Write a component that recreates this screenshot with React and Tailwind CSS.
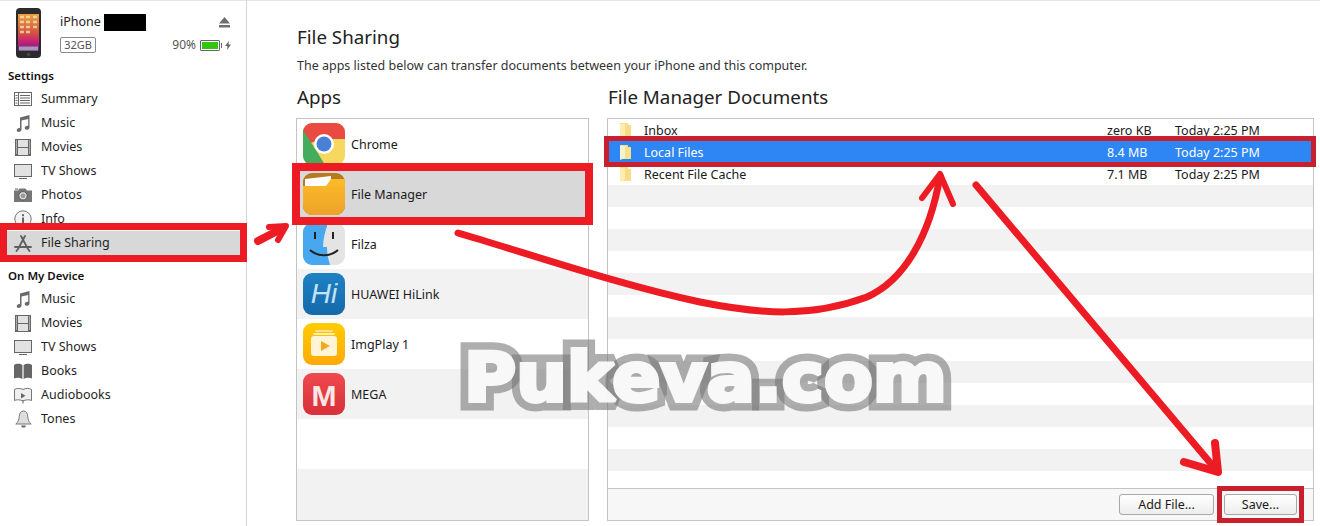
const settings = [
  ["Summary", SummaryIcon],
  ["Music", MusicIcon],
  ["Movies", FilmIcon],
  ["TV Shows", TvIcon],
  ["Photos", CameraIcon],
  ["Info", InfoIcon],
  ["File Sharing", AppStoreIcon],
];

const device = [
  ["Music", MusicIcon],
  ["Movies", FilmIcon],
  ["TV Shows", TvIcon],
  ["Books", BookIcon],
  ["Audiobooks", AudiobookIcon],
  ["Tones", BellIcon],
];

const apps = [
  ["Chrome", ChromeIcon],
  ["File Manager", FolderAppIcon],
  ["Filza", FilzaIcon],
  ["HUAWEI HiLink", HiLinkIcon],
  ["ImgPlay 1", ImgPlayIcon],
  ["MEGA", MegaIcon],
  ["", null],
  ["", null],
];

const docs = [
  ["Inbox", "zero KB", "Today 2:25 PM"],
  ["Local Files", "8.4 MB", "Today 2:25 PM"],
  ["Recent File Cache", "7.1 MB", "Today 2:25 PM"],
];

function SummaryIcon() {
  return (
    <svg width="18" height="14" viewBox="0 0 18 14" fill="none" stroke="#666" strokeWidth="1">
      <rect x="0.5" y="0.5" width="17" height="13" />
      <path d="M4.5 1v12M6 3.5h10M6 6h10M6 8.5h10M6 11h10M1.5 3.5h2M1.5 6h2M1.5 8.5h2M1.5 11h2" />
    </svg>
  );
}

function MusicIcon() {
  return (
    <svg width="14" height="17" viewBox="0 0 14 17" fill="#6a6a6a">
      <path d="M4 2.500 13.500 0v12.200c0 1.600-1.300 2.600-2.800 2.600-1.200 0-2-.7-2-1.700 0-1.300 1.200-2.100 2.600-2.300l.9-.2V4L5.500 5.500v9c0 1.600-1.300 2.500-2.800 2.500-1.200 0-2-.7-2-1.700 0-1.300 1.200-2.100 2.600-2.300l.7-.2z" />
    </svg>
  );
}

function FilmIcon() {
  return (
    <svg width="16" height="17" viewBox="0 0 16 17">
      <rect x="0" y="0" width="16" height="17" fill="#666" />
      <rect x="3" y="1" width="10" height="7" fill="#e2e2e2" />
      <rect x="3" y="9" width="10" height="7" fill="#e2e2e2" />
      <path d="M1 2h1M1 4h1M1 6h1M1 8h1M1 10h1M1 12h1M1 14h1M14 2h1M14 4h1M14 6h1M14 8h1M14 10h1M14 12h1M14 14h1" stroke="#eee" strokeWidth="1" />
    </svg>
  );
}

function TvIcon() {
  return (
    <svg width="18" height="15" viewBox="0 0 18 15">
      <rect x="0.5" y="0.5" width="17" height="12" fill="#e2e2e2" stroke="#666" />
      <path d="M5 14.500h8" stroke="#666" />
    </svg>
  );
}

function CameraIcon() {
  return (
    <svg width="18" height="14" viewBox="0 0 18 14">
      <path d="M0 2.500h4L5.500.5h6l1.500 2h5V14H0z" fill="#777" />
      <circle cx="9" cy="7.800" r="4.200" fill="#ddd" stroke="#555" />
      <circle cx="9" cy="7.800" r="2.400" fill="#999" />
      <rect x="1" y="0.500" width="3" height="1.200" fill="#777" />
    </svg>
  );
}

function InfoIcon() {
  return (
    <svg width="18" height="18" viewBox="0 0 18 18">
      <circle cx="9" cy="9" r="8.200" fill="#f2f2f2" stroke="#777" />
      <rect x="8" y="7.500" width="2" height="6" fill="#666" />
      <rect x="8" y="4.200" width="2" height="2" fill="#666" />
    </svg>
  );
}

function AppStoreIcon() {
  return (
    <svg width="18" height="17" viewBox="0 0 18 17" fill="none" stroke="#5f5f5f" strokeWidth="1.800" strokeLinecap="round">
      <path d="M7 1l7 13M11 1 4 14M1 12h16M14 14l1.500 2M4 14l-1.500 2" />
    </svg>
  );
}

function BookIcon() {
  return (
    <svg width="18" height="16" viewBox="0 0 18 16" fill="#666">
      <path d="M0 2C2 .5 6 .3 8.400 2v14C6 14.500 2 14.500 0 15.500zM18 2c-2-1.500-6-1.700-8.400 0v14c2.400-1.500 6.400-1.500 8.400-.5z" />
    </svg>
  );
}

function AudiobookIcon() {
  return (
    <svg width="18" height="17" viewBox="0 0 18 17">
      <path d="M.5 2.500C2.500 1 6.500 1 9 2.500c2.500-1.500 6.500-1.500 8.500 0v11c-2-1-6-1-8.500.5-2.500-1.500-6.500-1.500-8.500-.5z" fill="#efefef" stroke="#777" />
      <path d="M7 6l4.500 2.700L7 11.500z" fill="#666" />
      <path d="M9 13v3.500" stroke="#666" />
    </svg>
  );
}

function BellIcon() {
  return (
    <svg width="17" height="18" viewBox="0 0 17 18">
      <path d="M8.500 1C5.500 1 4.500 3.500 4.200 6.500 4 9.500 3.500 12 .8 14h15.400c-2.700-2-3.200-4.500-3.400-7.500C12.500 3.500 11.500 1 8.500 1z" fill="#ddd" stroke="#777" />
      <path d="M6 15.500h5l-1 2H7z" fill="#666" />
    </svg>
  );
}

function ChromeIcon() {
  return (
    <svg width="42" height="42" viewBox="0 0 42 42">
      <rect width="42" height="42" rx="9" fill="#f6d860" />
      <path d="M0 9a9 9 0 0 1 9-9h24a9 9 0 0 1 9 9v7H21L7 20z" fill="#e94b43" />
      <path d="M0 7 13 27l9 15H9a9 9 0 0 1-9-9z" fill="#43ad5b" />
      <circle cx="21" cy="21" r="10" fill="#fff" />
      <circle cx="21" cy="21" r="7.500" fill="#4a7fd6" />
    </svg>
  );
}

function FolderAppIcon() {
  return (
    <svg width="42" height="42" viewBox="0 0 42 42">
      <defs>
        <linearGradient id="fm" x1="0" y1="0" x2="0" y2="1">
          <stop offset="0" stopColor="#fdbb28" />
          <stop offset="1" stopColor="#eba32a" />
        </linearGradient>
      </defs>
      <rect width="42" height="42" rx="9" fill="#b57a22" />
      <path d="M2 6 28 3v11H2z" fill="#fff" />
      <path d="M0 13h23l5-7h14v27a9 9 0 0 1-9 9H9a9 9 0 0 1-9-9z" fill="url(#fm)" />
    </svg>
  );
}

function FilzaIcon() {
  return (
    <svg width="42" height="42" viewBox="0 0 42 42">
      <rect width="42" height="42" rx="9" fill="#e4e4e4" />
      <path d="M9 0h16c-3 8-5 17-5 24h4c0 6 1 12 3 18H9a9 9 0 0 1-9-9V9a9 9 0 0 1 9-9z" fill="#47a8f0" />
      <path d="M12 9v7M30 9v7" stroke="#222" strokeWidth="2" />
      <path d="M7 27c8 7 20 7 28 0" fill="none" stroke="#222" strokeWidth="2" />
    </svg>
  );
}

function HiLinkIcon() {
  return (
    <svg width="42" height="42" viewBox="0 0 42 42">
      <defs>
        <linearGradient id="hi" x1="0" y1="0" x2="0" y2="1">
          <stop offset="0" stopColor="#1f81c4" />
          <stop offset="1" stopColor="#146aa9" />
        </linearGradient>
      </defs>
      <rect width="42" height="42" rx="9" fill="url(#hi)" />
      <text x="21" y="30" textAnchor="middle" fontFamily="'Liberation Sans', sans-serif" fontStyle="italic" fontSize="28" fill="#c4e3f7">Hi</text>
    </svg>
  );
}

function ImgPlayIcon() {
  return (
    <svg width="42" height="42" viewBox="0 0 42 42">
      <defs>
        <linearGradient id="ip" x1="0" y1="0" x2="0" y2="1">
          <stop offset="0" stopColor="#ffcc00" />
          <stop offset="1" stopColor="#ffa908" />
        </linearGradient>
      </defs>
      <rect width="42" height="42" rx="9" fill="url(#ip)" />
      <rect x="12" y="7" width="18" height="2" rx="1" fill="#fde28a" />
      <rect x="10" y="10" width="22" height="2" rx="1" fill="#feeeb8" />
      <rect x="8" y="13" width="26" height="20" rx="3" fill="#fff5d6" />
      <path d="M18 18l9 5-9 5z" fill="#f5a81c" />
    </svg>
  );
}

function MegaIcon() {
  return (
    <svg width="42" height="42" viewBox="0 0 42 42">
      <defs>
        <linearGradient id="mg" x1="0" y1="0" x2="0" y2="1">
          <stop offset="0" stopColor="#ef4a4e" />
          <stop offset="1" stopColor="#d7303a" />
        </linearGradient>
      </defs>
      <rect width="42" height="42" rx="9" fill="url(#mg)" />
      <text x="21" y="33" textAnchor="middle" fontFamily="'Liberation Sans', sans-serif" fontWeight="700" fontSize="30" fill="#fbe6e6">M</text>
    </svg>
  );
}

function PhoneIcon() {
  return (
    <svg width="25" height="50" viewBox="0 0 25 50">
      <defs>
        <linearGradient id="wall" x1="0" y1="0" x2="0" y2="1">
          <stop offset="0" stopColor="#e8a33a" />
          <stop offset="0.5" stopColor="#d5553f" />
          <stop offset="0.75" stopColor="#c81f78" />
          <stop offset="1" stopColor="#5b2a7c" />
        </linearGradient>
      </defs>
      <rect x="0" y="0" width="25" height="50" rx="4" fill="#2b2b2d" />
      <rect x="2" y="6" width="21" height="37" fill="url(#wall)" />
      <path d="M4 9h4M10 9h4M17 9h4M4 14h4M10 14h4M17 14h4M4 19h4M10 19h4M17 19h4M4 24h4M10 24h4" stroke="#f6e5c0" strokeWidth="2.500" strokeOpacity="0.75" />
      <rect x="3" y="38.500" width="19" height="4" fill="#b9c8d6" fillOpacity="0.7" />
      <circle cx="12.500" cy="46.500" r="2" fill="#444" />
    </svg>
  );
}

function DocFolder({ selected }) {
  return (
    <svg width="13" height="15" viewBox="0 0 13 15">
      <path d="M1 0h8v2h3v12H1z" fill={selected ? "#fbe08c" : "#f9dc85"} />
      <path d="M1 1v14l5-2V1z" fill={selected ? "#f5f2d0" : "#fdeeb0"} />
    </svg>
  );
}

function NavRow({ label, Icon, active }) {
  return (
    <div className={`flex items-center h-6 pl-[14px] ${active ? "bg-[#d8d8d8]" : ""}`}>
      <div className="w-[18px] flex justify-center">
        <Icon />
      </div>
      <span className="ml-[9px] text-[12.500px] text-[#1f1f1f]">{label}</span>
    </div>
  );
}

function Sidebar() {
  return (
    <aside className="w-[247px] shrink-0 border-r border-[#d4d4d4] flex flex-col">
      <div className="h-[67px] flex pl-4 pt-2 shrink-0">
        <PhoneIcon />
        <div className="ml-[19px] w-[171px]">
          <div className="flex items-center h-[22px] mt-[3px]">
            <span className="text-[12.500px] text-[#222]">iPhone</span>
            <span className="ml-[3px] w-[42px] h-[17px] bg-black" />
            <svg className="ml-auto mr-[1px]" width="11" height="11" viewBox="0 0 11 11" fill="#6e6e6e">
              <path d="M5.500 0 11 6.500H0zM0 8h11v2.500H0z" />
            </svg>
          </div>
          <div className="flex items-center mt-[3px]">
            <span className="w-[36px] h-[16px] rounded-[2px] border border-[#8a8a8a] text-[11px] leading-[14px] text-center text-[#555]">32GB</span>
            <span className="ml-auto text-[12px] text-[#555]">90%</span>
            <span className="ml-[4px] w-[20px] h-[11px] border border-[#666] p-[1px] rounded-[1px]">
              <span className="block h-full bg-[#32c40e]" />
            </span>
            <span className="ml-[1px] w-[1px] h-[5px] bg-[#666]" />
            <svg className="ml-[3px]" width="6" height="9" viewBox="0 0 6 9" fill="#666">
              <path d="M4 0 0 5h2.500L2 9l4-5.500H3.500z" />
            </svg>
          </div>
        </div>
      </div>
      <div className="pl-2 h-[20px] leading-[18px] text-[11.500px] font-semibold text-[#111]">Settings</div>
      {settings.map(([label, Icon]) => (
        <NavRow key={label} label={label} Icon={Icon} active={label === "File Sharing"} />
      ))}
      <div className="pl-2 mt-[13px] h-[19px] leading-[16px] text-[11.500px] font-semibold text-[#111]">On My Device</div>
      {device.map(([label, Icon]) => (
        <NavRow key={label} label={label} Icon={Icon} />
      ))}
    </aside>
  );
}

function AppsPanel() {
  return (
    <section className="w-[293px] shrink-0 flex flex-col">
      <h2 className="text-[18.750px] leading-[26px] text-[#222] pl-[1px] h-[34px]">Apps</h2>
      <div className="border border-[#c4c4c4] h-[403px] overflow-hidden">
        {apps.map(([name, Icon], i) => (
          <div
            key={i}
            className={`h-[50px] last:h-[51px] flex items-center pl-[6px] ${i === 1 ? "bg-[#d8d8d8]" : i % 2 === 1 ? "bg-[#f2f2f2]" : "bg-white"}`}
          >
            {Icon && <Icon />}
            <span className="ml-[6px] mt-[2px] text-[12.500px] text-[#1a1a1a]">{name}</span>
          </div>
        ))}
      </div>
    </section>
  );
}

function DocsPanel() {
  const rows = Array.from({ length: 17 }, (_, i) => docs[i] || null);
  return (
    <section className="w-[707px] shrink-0 flex flex-col">
      <h2 className="text-[18.750px] leading-[26px] text-[#222] pl-[1px] h-[34px]">File Manager Documents</h2>
      <div className="border border-[#c4c4c4] h-[403px] flex flex-col">
        <div className="h-[369px] overflow-hidden">
          {rows.map((row, i) => (
            <div
              key={i}
              className={`h-[22px] flex items-center text-[12.500px] ${i === 1 ? "bg-[#2e86f5] text-white" : i % 2 === 1 ? "bg-[#f2f2f2] text-[#1a1a1a]" : "bg-white text-[#1a1a1a]"}`}
            >
              {row && (
                <>
                  <div className="ml-[11px] w-[13px] flex">
                    <DocFolder selected={i === 1} />
                  </div>
                  <span className="ml-[12px] mt-[2px] w-[463px]">{row[0]}</span>
                  <span className="mt-[2px] w-[68px]">{row[1]}</span>
                  <span className="mt-[2px]">{row[2]}</span>
                </>
              )}
            </div>
          ))}
        </div>
        <div className="flex-1 border-t border-[#c4c4c4] bg-[#f7f7f7] flex items-center justify-end pr-[16px] gap-[10px]">
          <button className="w-[95px] h-[21px] rounded-[3px] border border-[#a8a8a8] bg-gradient-to-b from-white to-[#ededed] text-[12.500px] leading-[18px] text-[#1a1a1a]">Add File...</button>
          <button className="w-[73px] h-[21px] rounded-[3px] border border-[#a8a8a8] bg-gradient-to-b from-white to-[#ededed] text-[12.500px] leading-[18px] text-[#1a1a1a]">Save...</button>
        </div>
      </div>
    </section>
  );
}

function Arrows() {
  return (
    <svg className="absolute inset-0 pointer-events-none" width="1320" height="526" viewBox="0 0 1320 526" fill="none" stroke="#ed1c24" strokeLinecap="round" strokeLinejoin="round">
      <path d="M458 233C530 254 620 285 700 302C760 314 810 318 867 297C905 280 930 235 940 176" strokeWidth="7" />
      <path d="M922 198 940 174 953 204" strokeWidth="6" />
      <path d="M976 185 1218 472" strokeWidth="7" />
      <path d="M1215 443 1218 472 1184 462" strokeWidth="8" />
      <path d="M258 241 283 228" strokeWidth="8" />
      <path d="M269 227 286 226 278 240" strokeWidth="6" />
    </svg>
  );
}

// white heavy letters on a wider gray outline, same text painted twice
function Watermark() {
  return (
    <svg className="absolute inset-0 pointer-events-none" width="1320" height="526" viewBox="0 0 1320 526" strokeLinejoin="miter" strokeMiterlimit="2">
      <defs>
        <text id="wm" x="464" y="401" textLength="483" lengthAdjust="spacingAndGlyphs" fontFamily="'DejaVu Sans', sans-serif" fontWeight="700" fontSize="68">Pukeva.com</text>
      </defs>
      <use href="#wm" fill="none" stroke="#787878" strokeOpacity="0.6" strokeWidth="19" />
      <use href="#wm" fill="#fff" stroke="#fff" strokeWidth="4" opacity="0.92" />
    </svg>
  );
}

export default function App() {
  return (
    <div className="relative w-[1320px] h-[526px] overflow-hidden bg-white shadow-[inset_0_1px_0_#e6e6e6] flex font-['Noto_Sans','Open_Sans',sans-serif]">
      <Sidebar />
      <main className="flex-1 pl-[49px]">
        <h1 className="mt-[23px] text-[18.750px] leading-[28px] text-[#222] pl-[1px]">File Sharing</h1>
        <p className="mt-[6px] text-[12.500px] leading-[18px] text-[#333] pl-[1px]">The apps listed below can transfer documents between your iPhone and this computer.</p>
        <div className="mt-[9px] flex gap-[18px]">
          <AppsPanel />
          <DocsPanel />
        </div>
      </main>

      {/* red marks on top of the shot */}
      <div className="absolute left-0 top-[223px] w-[247px] h-[39px] border-[7px] border-[#ed1c24]" />
      <div className="absolute left-[292px] top-[163px] w-[301px] h-[62px] border-[8px] border-[#ed1c24]" />
      <div className="absolute left-[604px] top-[136px] w-[712px] h-[31px] border-[5px] border-[#c8202c]" />
      <div className="absolute left-[1217px] top-[486px] w-[87px] h-[37px] border-[5px] border-[#c8202c]" />
      <Arrows />
      <Watermark />
    </div>
  );
}
